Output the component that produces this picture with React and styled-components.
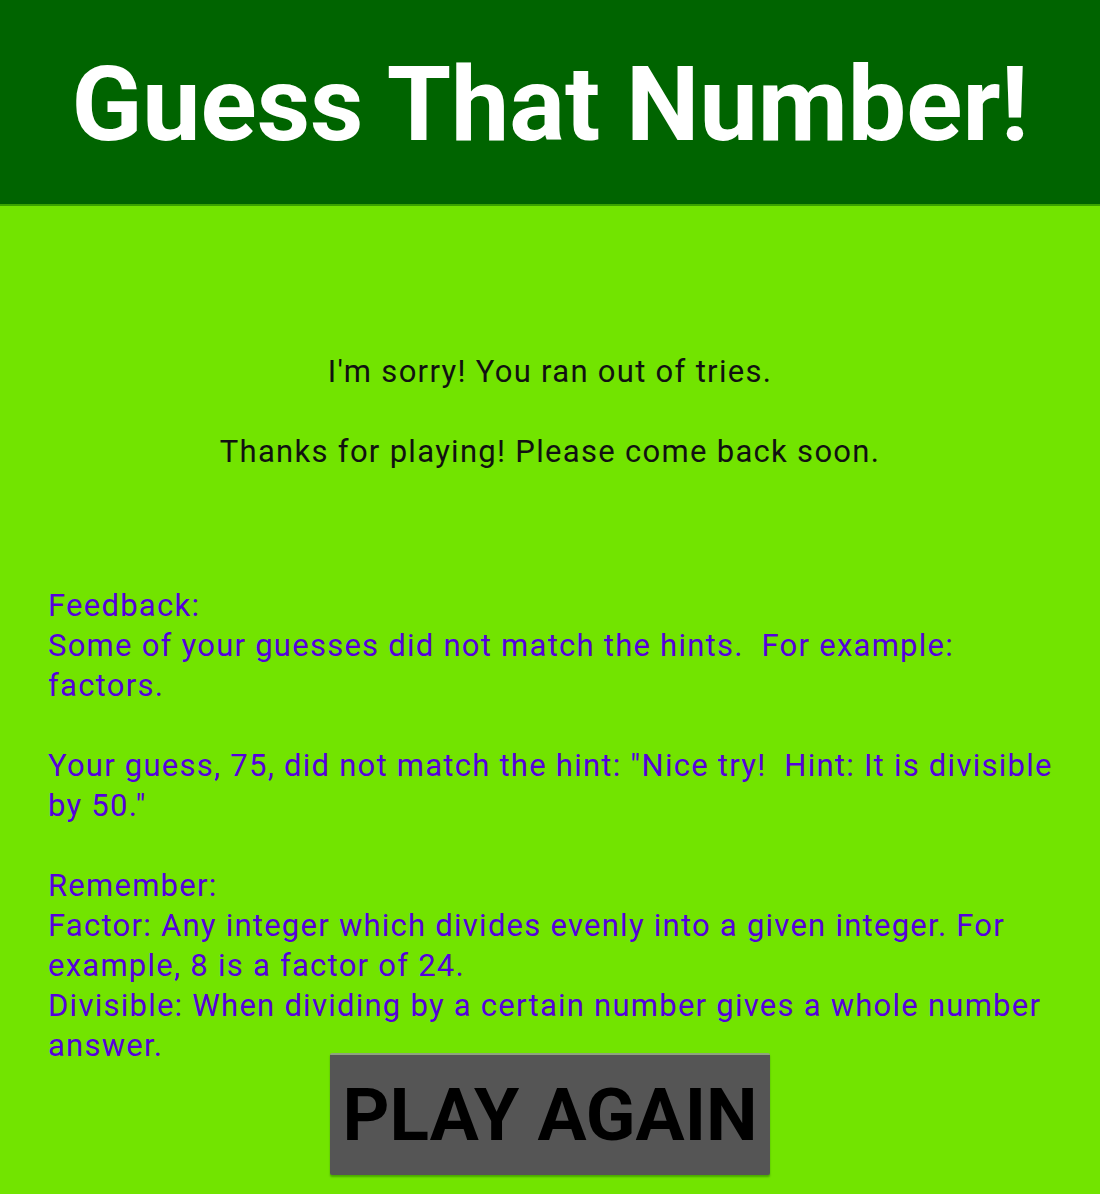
import styled, { createGlobalStyle } from "styled-components";

const GlobalStyle = createGlobalStyle`
  html, body {
    margin: 0;
    padding: 0;
    background: #72e400;
  }
  body {
    font-family: Roboto, "Liberation Sans", sans-serif;
  }
`;

const Header = styled.header`
  height: 204px;
  background: #006400;
  border-bottom: 2px solid #3aa300;
  display: flex;
  align-items: center;
  justify-content: center;
  h1 {
    margin: 0;
    color: #fff;
    font-size: 104px;
    font-weight: 700;
    letter-spacing: 0;
    line-height: 1;
    padding-top: 6px;
  }
`;

const Main = styled.main`
  padding: 146px 30px 20px 48px;
  display: flex;
  flex-direction: column;
`;

const Message = styled.p`
  margin: 0 18px 0 0;
  text-align: center;
  color: #111;
  font-size: 31px;
  line-height: 40px;
  letter-spacing: 1.3px;
  white-space: pre-wrap;
`;

const Feedback = styled.p`
  margin: 114px 0 0;
  color: #5500dd;
  font-size: 31px;
  line-height: 40px;
  letter-spacing: 1.25px;
  white-space: pre-wrap;
`;

const PlayButton = styled.button`
  align-self: center;
  margin: -13px 18px 0 0;
  width: 440px;
  height: 122px;
  background: #555555;
  border: none;
  border-top: 2px solid #8fa37f;
  border-radius: 2px;
  box-shadow: 0 2px 2px rgba(0, 60, 0, 0.35);
  color: #000;
  font-family: Roboto, "Liberation Sans", sans-serif;
  font-size: 73px;
  font-weight: 700;
  padding: 0;
  cursor: pointer;
`;

const App = () => {
  return (
    <>
      <GlobalStyle />
      <Header>
        <h1>Guess That Number!</h1>
      </Header>
      <Main>
        <Message>
          {"I'm sorry! You ran out of tries.\n\nThanks for playing! Please come back soon."}
        </Message>
        <Feedback>
          {"Feedback:\nSome of your guesses did not match the hints.  For example: factors.\n\nYour guess, 75, did not match the hint: \"Nice try!  Hint: It is divisible by 50.\"\n\nRemember:\nFactor: Any integer which divides evenly into a given integer. For example, 8 is a factor of 24.\nDivisible: When dividing by a certain number gives a whole number answer."}
        </Feedback>
        <PlayButton>PLAY AGAIN</PlayButton>
      </Main>
    </>
  );
};

export default App;
